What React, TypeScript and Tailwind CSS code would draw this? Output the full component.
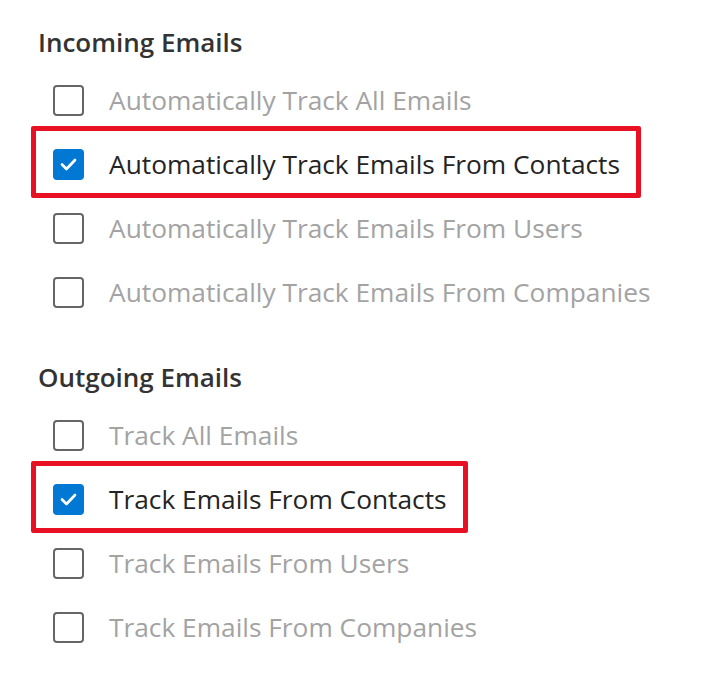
import { useState } from 'react'

type Option = { label: string; checked: boolean; highlight?: boolean }

const incoming: Option[] = [
  { label: 'Automatically Track All Emails', checked: false },
  { label: 'Automatically Track Emails From Contacts', checked: true, highlight: true },
  { label: 'Automatically Track Emails From Users', checked: false },
  { label: 'Automatically Track Emails From Companies', checked: false },
]

const outgoing: Option[] = [
  { label: 'Track All Emails', checked: false },
  { label: 'Track Emails From Contacts', checked: true, highlight: true },
  { label: 'Track Emails From Users', checked: false },
  { label: 'Track Emails From Companies', checked: false },
]

function Box({ checked }: { checked: boolean }) {
  if (checked) {
    return (
      <span className="flex h-[31px] w-[31px] shrink-0 items-center justify-center rounded-[4px] bg-[#0078d4]">
        <svg width="31" height="31" viewBox="0 0 31 31" fill="none">
          <path d="M9 15.5l4.5 4.5 8.5-9" stroke="#fff" strokeWidth="2.7" strokeLinecap="round" strokeLinejoin="round" />
        </svg>
      </span>
    )
  }
  return <span className="h-[31px] w-[31px] shrink-0 rounded-[4px] border-2 border-[#666]" />
}

function Row({ opt }: { opt: Option }) {
  const [checked, setChecked] = useState(opt.checked)
  return (
    <div className="flex h-16 items-center pl-[15px]">
      <label
        className="relative flex h-10 cursor-pointer items-center gap-[25px] leading-10"
        onClick={() => setChecked(!checked)}
      >
        <Box checked={checked} />
        <span className={checked ? 'text-[#242424]' : 'text-[#a3a3a3]'}>{opt.label}</span>
        {opt.highlight && (
          <span className="pointer-events-none absolute -top-[18px] -bottom-[14px] -left-[22px] -right-[21px] rounded-[2px] border-[5px] border-[#e81123]" />
        )}
      </label>
    </div>
  )
}

function Group({ title, options }: { title: string; options: Option[] }) {
  return (
    <section>
      <h2 className="h-9 text-[26px] font-semibold leading-9 text-[#333]">{title}</h2>
      <div className="mt-2">
        {options.map((o) => (
          <Row key={o.label} opt={o} />
        ))}
      </div>
    </section>
  )
}

export default function App() {
  return (
    <div className="min-h-[683px] bg-white pl-[38px] pt-6 text-[26.3px] font-['Open_Sans',sans-serif]">
      <div className="space-y-[35px]">
        <Group title="Incoming Emails" options={incoming} />
        <Group title="Outgoing Emails" options={outgoing} />
      </div>
    </div>
  )
}
